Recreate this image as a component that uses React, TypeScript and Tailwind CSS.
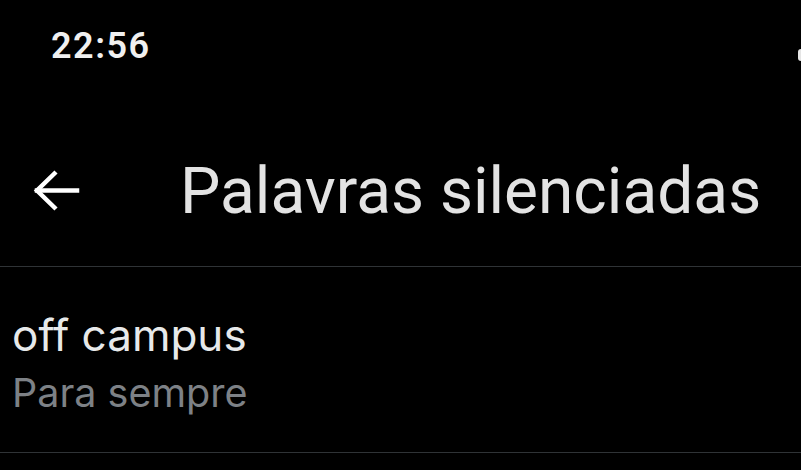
export default function App() {
  return (
    <div className="w-[801px] h-[470px] bg-black overflow-hidden text-white">
      {/* status bar */}
      <div className="h-[100px] flex items-start justify-between pl-[51px] pt-[24px]">
        <span className="font-['Roboto',sans-serif] font-semibold text-[36px] leading-[44px] tracking-[1.5px] text-[#f0f0f0]">22:56</span>
        <span className="mt-[25px] w-[3px] h-[12px] bg-[#e5e5e5] rounded-l-sm" />
      </div>

      {/* header */}
      <div className="h-[167px] flex items-start border-b border-[#2f3336] pt-[56px]">
        <div className="w-[180px] pl-[33px] pt-[12px]">
          <svg width="47" height="45" viewBox="0 0 47 45" fill="none" stroke="#fff" strokeWidth="4.5" strokeLinecap="square">
            <path d="M4 22.5H44" />
            <path d="M23 4L4 22.5L23 41" strokeLinecap="butt" />
          </svg>
        </div>
        <h1 className="font-['Roboto',sans-serif] text-[64px] leading-[72px] text-[#e3e3e3]">Palavras silenciadas</h1>
      </div>

      {/* item */}
      <div className="border-b border-[#2f3336] pl-[12px] pt-[44px] pb-[38px] font-['Inter',sans-serif]">
        <div className="text-[44px] leading-[48px] text-[#e7e9ea]">off campus</div>
        <div className="text-[39.5px] leading-[42px] text-[#7d8186] mt-[13px]">Para sempre</div>
      </div>
    </div>
  );
}
